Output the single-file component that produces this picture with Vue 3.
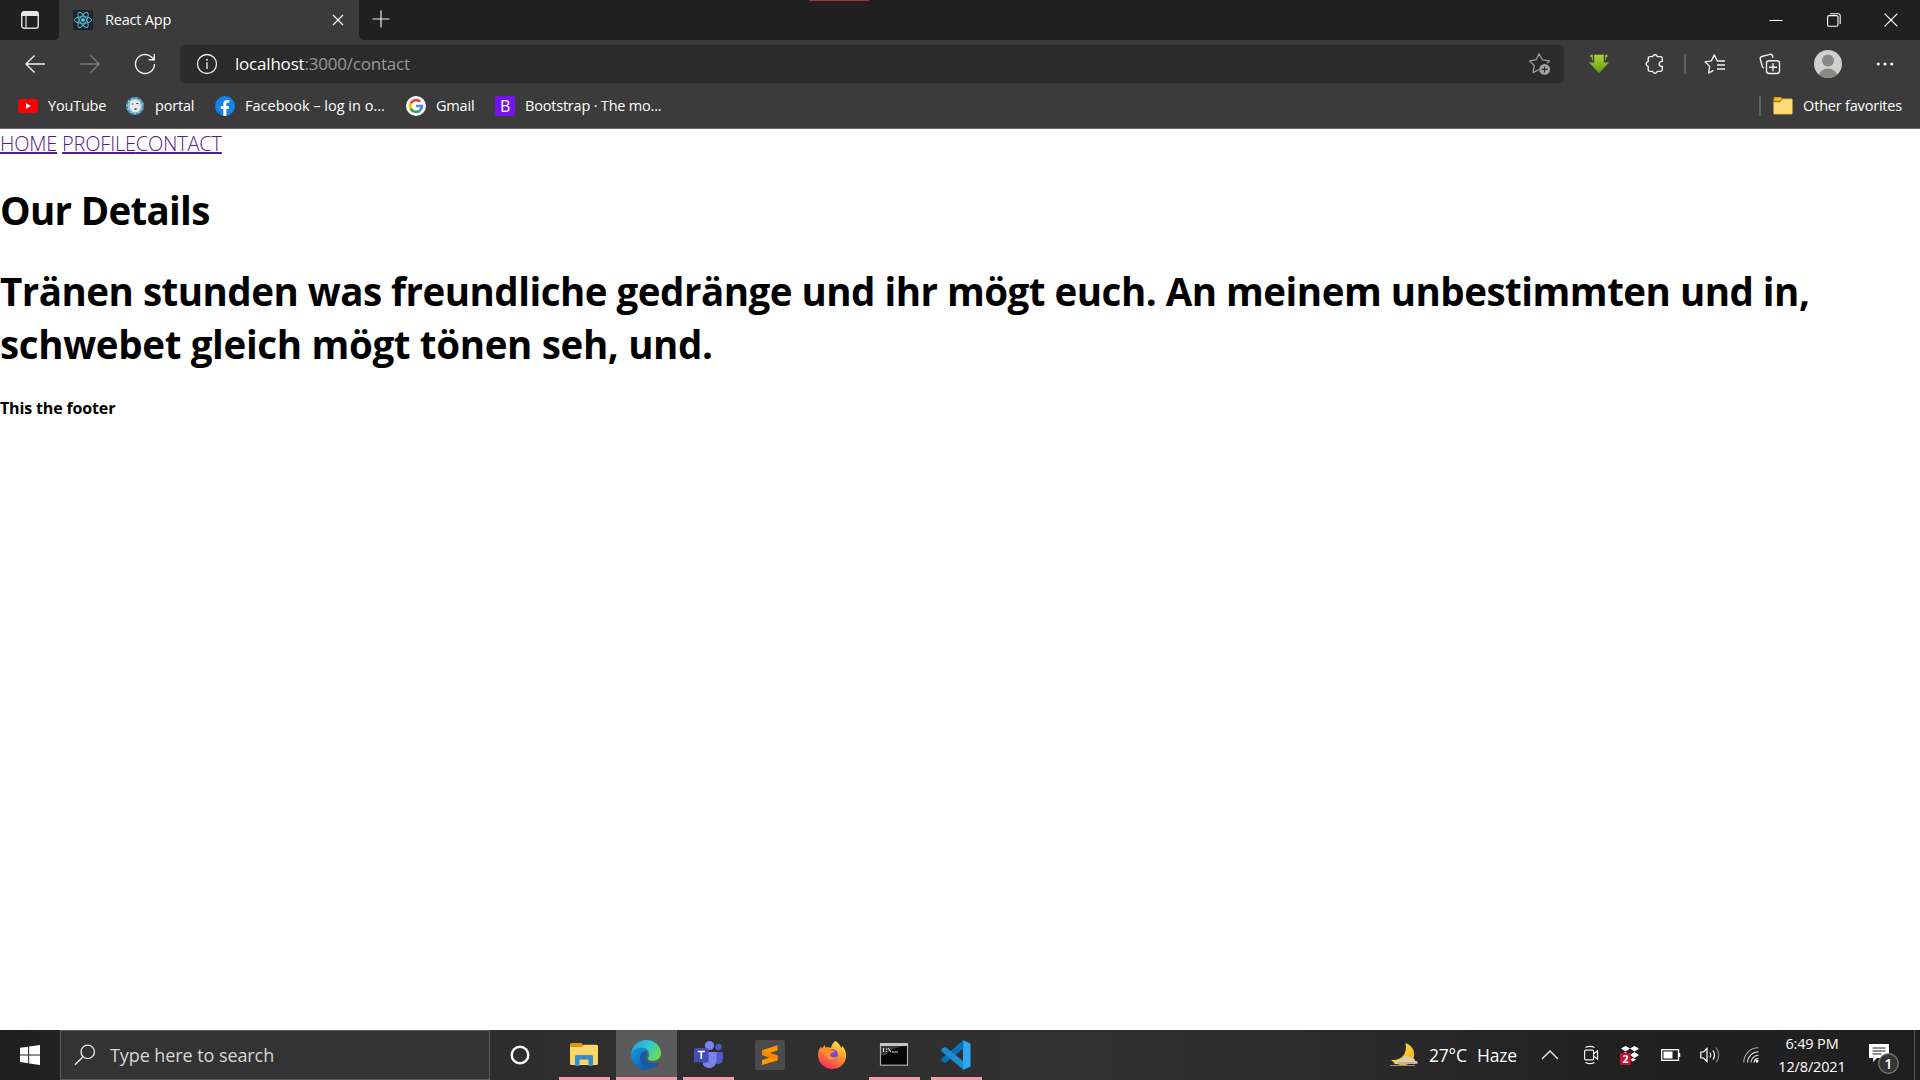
<script setup>
const bookmarks = [
  { id: 'youtube', label: 'YouTube', width: 67 },
  { id: 'portal', label: 'portal', width: 50 },
  { id: 'facebook', label: 'Facebook – log in o...', width: 151 },
  { id: 'google', label: 'Gmail', width: 49 },
  { id: 'bootstrap', label: 'Bootstrap · The mo...', width: 150 }
]
const apps = [
  { id: 'cortana', running: false },
  { id: 'explorer', running: true },
  { id: 'edge', running: true, active: true },
  { id: 'teams', running: true },
  { id: 'sublime', running: false },
  { id: 'firefox', running: false },
  { id: 'terminal', running: true },
  { id: 'vscode', running: true }
]
</script>

<template>
  <div class="screen">
    <header class="browser">
      <div class="tabstrip">
        <div class="tab-actions">
          <svg width="20" height="20" viewBox="0 0 20 20"><rect x="1.75" y="1.75" width="16.5" height="16.5" rx="2.5" fill="none" stroke="#d6d6d6" stroke-width="1.5" /><path d="M1.5 6V4a3 3 0 0 1 3-3h11a3 3 0 0 1 3 3v2z" fill="#e8e8e8" /><path d="M6 6v12" stroke="#d6d6d6" stroke-width="1.3" /></svg>
        </div>
        <div class="tab">
          <svg class="favicon" width="20" height="20" viewBox="0 0 20 20"><rect width="20" height="20" rx="1" fill="#20232a" /><g fill="none" stroke="#53b9d1" stroke-width="1"><ellipse cx="10" cy="10" rx="8.6" ry="3.3" /><ellipse cx="10" cy="10" rx="8.6" ry="3.3" transform="rotate(60 10 10)" /><ellipse cx="10" cy="10" rx="8.6" ry="3.3" transform="rotate(120 10 10)" /></g><circle cx="10" cy="10" r="1.8" fill="#61dafb" /></svg>
          <span class="tab-title">React App</span>
          <svg class="tab-close" width="12" height="12" viewBox="0 0 12 12"><path d="M1 1l10 10M11 1L1 11" stroke="#f0f0f0" stroke-width="1.3" /></svg>
        </div>
        <svg class="new-tab" width="18" height="18" viewBox="0 0 18 18"><path d="M9 .5v17M.5 9h17" stroke="#ededed" stroke-width="1.2" /></svg>
        <i class="red-mark"></i>
        <div class="window-buttons">
          <svg width="14" height="14" viewBox="0 0 14 14"><path d="M.5 7.5h13" stroke="#fff" stroke-width="1.1" /></svg>
          <svg width="14" height="14" viewBox="0 0 14 14"><rect x=".6" y="2.6" width="10.4" height="10.6" rx="1.4" fill="none" stroke="#fff" stroke-width="1.1" /><path d="M3 .7h8.2a2 2 0 0 1 2 2V11" fill="none" stroke="#fff" stroke-width="1.1" /></svg>
          <svg width="14" height="14" viewBox="0 0 14 14"><path d="M.6.6l12.8 12.8M13.4.6L.6 13.4" stroke="#fff" stroke-width="1.2" /></svg>
        </div>
      </div>

      <div class="toolbar">
        <div class="nav-icons">
          <svg width="22" height="20" viewBox="0 0 22 20"><path d="M10.5 1.5L2 10l8.5 8.5M2 10h19" fill="none" stroke="#f2f2f2" stroke-width="1.4" /></svg>
          <svg width="22" height="20" viewBox="0 0 22 20"><path d="M11.5 1.5L20 10l-8.5 8.5M20 10H1" fill="none" stroke="#7c7c7c" stroke-width="1.4" /></svg>
          <svg width="22" height="22" viewBox="0 0 22 22"><path d="M20.5 11a9.5 9.5 0 1 1-3-6.9l2.3 2.2M20.3 1v5.7h-5.6" fill="none" stroke="#f2f2f2" stroke-width="1.4" /></svg>
        </div>
        <div class="address">
          <svg class="info" width="22" height="22" viewBox="0 0 22 22"><circle cx="11" cy="11" r="9.5" fill="none" stroke="#e8e8e8" stroke-width="1.3" /><path d="M11 9.3V16" stroke="#e8e8e8" stroke-width="1.4" /><circle cx="11" cy="6.7" r=".95" fill="#e8e8e8" /></svg>
          <span class="url"><b>localhost</b>:3000/contact</span>
          <svg class="star-add" width="24" height="24" viewBox="0 0 24 24"><path d="M19.2 11.2l2.3-2.3-7-1L11 1.8 8 7.9l-6.5.9 4.7 4.8-1.1 7 5.7-3" fill="none" stroke="#9a9a9a" stroke-width="1.3" stroke-linejoin="round" /><circle cx="16.6" cy="17.4" r="5.4" fill="#a3a3a3" /><path d="M16.6 14.4v6M13.6 17.4h6" stroke="#2b2b2b" stroke-width="1.1" /></svg>
        </div>
        <div class="tools">
          <svg class="download" width="22" height="20" viewBox="0 0 22 20"><defs><linearGradient id="dl" x1="0" y1="0" x2="0" y2="1"><stop offset="0" stop-color="#b3d334" /><stop offset="1" stop-color="#5e9a1c" /></linearGradient></defs><path d="M6.2.7h9.6v7.8h5.200L11 19.2 1 8.500h5.200z" fill="url(#dl)" /><path d="M2.500.7h2.300v5.500H4V3.300H2.500zM19.500.7h-2.300v5.500h.8V3.300h1.500z" fill="#9cc72e" /></svg>
          <svg class="extensions" width="22" height="22" viewBox="0 0 22 22"><path d="M6 3.600h2.600a2.500 2.500 0 0 1 4.800 0h3.100a1.800 1.800 0 0 1 1.800 1.800v3a2.600 2.600 0 1 0 0 5.100v3.100a1.800 1.800 0 0 1-1.800 1.800h-3.100a2.500 2.500 0 0 1-4.800 0H6a1.800 1.800 0 0 1-1.800-1.800v-3.200a2.500 2.500 0 0 1 0-4.900V5.400A1.800 1.800 0 0 1 6 3.600z" fill="none" stroke="#f0f0f0" stroke-width="1.4" /></svg>
          <i class="divider"></i>
          <svg class="favorites" width="22" height="22" viewBox="0 0 22 22"><path d="M21 8h-7.700l-3-6.100L7.400 7.900l-6.400.9 4.700 4.600-1.200 6.700 5-2.700" fill="none" stroke="#f0f0f0" stroke-width="1.3" stroke-linejoin="round" /><path d="M13 12h8M13 16h8" stroke="#f0f0f0" stroke-width="1.3" /></svg>
          <svg class="collections" width="22" height="22" viewBox="0 0 22 22"><rect x="7.5" y="7.7" width="13" height="12.8" rx="2.5" fill="none" stroke="#f0f0f0" stroke-width="1.4" /><path d="M14 10.2v8M10 14.2h8M4.800 15.300L3.500 14 1.300 6.200a2.200 2.200 0 0 1 1.500-2.700l8-2.200a2.200 2.200 0 0 1 2.700 1.500l.6 2" fill="none" stroke="#f0f0f0" stroke-width="1.4" /></svg>
          <svg class="avatar" width="28" height="28" viewBox="0 0 28 28"><defs><clipPath id="face"><circle cx="14" cy="14" r="14" /></clipPath></defs><g clip-path="url(#face)"><rect width="28" height="28" fill="#d2d0ce" /><circle cx="14" cy="10.5" r="6" fill="#8a8886" /><ellipse cx="14" cy="27" rx="9.5" ry="8.5" fill="#8a8886" /></g></svg>
          <svg class="more" width="18" height="6" viewBox="0 0 18 6"><g fill="#f5f5f5"><circle cx="2.3" cy="3" r="1.6" /><circle cx="9" cy="3" r="1.6" /><circle cx="15.7" cy="3" r="1.6" /></g></svg>
        </div>
      </div>

      <div class="bookmarks">
        <div v-for="b in bookmarks" :key="b.id" class="bookmark" :class="b.id">
          <svg v-if="b.id === 'youtube'" width="20" height="20" viewBox="0 0 20 20"><rect y="3" width="20" height="14" rx="3.5" fill="#f00" /><path d="M8 7.2v5.6l5-2.8z" fill="#fff" /></svg>
          <svg v-else-if="b.id === 'portal'" width="20" height="20" viewBox="0 0 20 20"><circle cx="10" cy="10" r="9" fill="#8fc0d8" /><circle cx="10" cy="10" r="8.2" fill="none" stroke="#3a7ca0" stroke-width="1.5" stroke-dasharray="3 1.500" /><path d="M5 5.500l4-2 5.500 1.500 1.500 6-3 5H8l-3-4z" fill="#e3ebee" /><path d="M6.500 8h2M11 7.500h2.500" stroke="#56606a" stroke-width="1.1" /><path d="M9.500 12h2v2h-2z" fill="#8b5d55" /></svg>
          <svg v-else-if="b.id === 'facebook'" width="20" height="20" viewBox="0 0 20 20"><circle cx="10" cy="10" r="10" fill="#1183f3" /><path d="M8.300 19.900v-7H5.800V10h2.500V7.800c0-2.500 1.500-3.900 3.800-3.900 1.100 0 2.200.2 2.200.2v2.500H13c-1.200 0-1.600.8-1.600 1.500V10h2.700l-.4 2.900h-2.300v7a10 10 0 0 1-3.100 0z" fill="#fff" /></svg>
          <svg v-else-if="b.id === 'google'" width="20" height="20" viewBox="0 0 20 20"><circle cx="10" cy="10" r="10" fill="#fff" /><g fill="none" stroke-width="2.7"><path d="M4.700 7.600A5.900 5.900 0 0 1 14.200 5.800" stroke="#ea4335" /><path d="M4.900 13A5.900 5.900 0 0 1 4.800 7.200" stroke="#fbbc05" /><path d="M13.900 14.400A5.900 5.900 0 0 1 4.700 12.600" stroke="#34a853" /><path d="M10.100 10h5.800a5.900 5.900 0 0 1-2.200 4.500" stroke="#4285f4" /></g></svg>
          <i v-else class="b-logo">B</i>
          <span :style="{ width: b.width + 'px' }">{{ b.label }}</span>
        </div>
        <div class="other">
          <i class="divider"></i>
          <svg width="20" height="20" viewBox="0 0 20 20"><path d="M.5 2.500A1.500 1.500 0 0 1 2 1h6l2 2-2 2.500H.5z" fill="#d9a514" /><path d="M.5 6H7l3-3.200h8.300a1.200 1.200 0 0 1 1.200 1.200v13a1.200 1.200 0 0 1-1.200 1.200H1.700A1.200 1.200 0 0 1 .5 17z" fill="#ffdc72" stroke="#b98a16" stroke-width=".6" /><path d="M2.300 3.300h5" stroke="#f8cf3e" stroke-width="1.5" /></svg>
          <span>Other favorites</span>
        </div>
      </div>
    </header>

    <main class="page">
      <nav><a>HOME</a> <a>PROFILE</a><a>CONTACT</a></nav>
      <h1 class="title">Our Details</h1>
      <h1 class="copy"><span class="line">Tränen stunden was freundliche gedränge und ihr mögt euch. An meinem unbestimmten und in,</span><br><span class="line last">schwebet gleich mögt tönen seh, und.</span></h1>
      <h5>This the footer</h5>
    </main>

    <footer class="taskbar">
      <div class="start">
        <svg width="20" height="20" viewBox="0 0 20 20"><path d="M0 2.800L8.200 1.700v7.700H0zM9.200 1.500L20 0v9.400H9.200zM0 10.400h8.200v7.800L0 17.100zM9.200 10.400H20V20L9.200 18.400z" fill="#fff" /></svg>
      </div>
      <div class="search">
        <svg width="22" height="22" viewBox="0 0 22 22"><circle cx="13.7" cy="7.9" r="6.7" fill="none" stroke="#eee" stroke-width="1.3" /><path d="M9 12.800L1 20.800" stroke="#eee" stroke-width="1.4" /></svg>
        <span>Type here to search</span>
      </div>
      <div class="apps">
        <div v-for="a in apps" :key="a.id" class="app" :class="[a.id, { running: a.running, active: a.active }]">
          <svg v-if="a.id === 'cortana'" width="30" height="30" viewBox="0 0 30 30"><circle cx="15" cy="15" r="8.3" fill="none" stroke="#f5f5f5" stroke-width="2.4" /></svg>
          <svg v-else-if="a.id === 'explorer'" width="30" height="30" viewBox="0 0 30 30"><path d="M1 4.500A1.500 1.500 0 0 1 2.500 3h9.800l2.200 2.500L12 8H1z" fill="#d99a15" /><path d="M1 7h11.500l2.200-2.300h12.800A1.500 1.500 0 0 1 29 6.200v17.300A1.500 1.500 0 0 1 27.500 25h-25A1.500 1.500 0 0 1 1 23.500z" fill="#fbd666" /><path d="M6 26v-9.500A1.500 1.500 0 0 1 7.500 15h15a1.500 1.500 0 0 1 1.500 1.500V26h-4.500v-6.500h-9V26z" fill="#368fcb" /></svg>
          <svg v-else-if="a.id === 'edge'" width="30" height="30" viewBox="0 0 30 30">
            <defs><linearGradient id="eg" x1="0" y1=".3" x2="1" y2=".7"><stop offset="0" stop-color="#25a4e4" /><stop offset=".5" stop-color="#33c6cf" /><stop offset="1" stop-color="#6be04b" /></linearGradient><linearGradient id="eb" x1="0" y1="0" x2=".6" y2="1"><stop offset="0" stop-color="#1c97dc" /><stop offset="1" stop-color="#1160ae" /></linearGradient></defs>
            <path d="M.2 13C1.200 5.500 7.500 0 15 0c9 0 15 6.500 15 13.300 0 4.600-3.700 7.400-8 7.400-4 0-5.200-1.200-5.200-2.200s1.200-1.500 1.200-3.500C18 11.500 14.500 9.500 10.500 9.500 6 9.500 2.500 11 .2 13z" fill="url(#eg)" />
            <path d="M.1 13.500C1.500 10 6 7.500 10.500 7.500c5 0 7.700 3.500 7.700 6.500-.6-1.600-2.200-2.600-4-2.600-2.900 0-4.700 3-4.700 6.500 0 6 4.500 10.800 9.800 11.500C17.500 30 16 30 14.500 30 6 30-.4 22.500.1 13.500z" fill="url(#eb)" />
            <path d="M11.800 12c-3.800 2-3.600 9.500.5 13.500 3.500 3.500 9 4.200 13 .5 1-.9 2-2 2.600-3 .3-.5-.1-.8-.6-.6-4.800 2.100-10.800.8-12.500-4.200-1-3 .2-5.400 1.700-6.200-1.500-.9-3.300-.8-4.700 0z" fill="#1459a6" />
          </svg>
          <svg v-else-if="a.id === 'teams'" width="30" height="30" viewBox="0 0 30 30"><circle cx="25.5" cy="7" r="3.2" fill="#5059c9" /><path d="M20 12h8.500A1.500 1.500 0 0 1 30 13.500V19a5 5 0 0 1-8 4z" fill="#5059c9" /><circle cx="16.5" cy="5.5" r="4.6" fill="#7b83eb" /><path d="M10 12h13.500v9a7.500 7.500 0 0 1-13.500 4z" fill="#7b83eb" /><rect x="1" y="8" width="14.5" height="14.5" rx="1.5" fill="#444bb1" /><path d="M4.800 11.500h7M8.300 11.500V19" stroke="#fff" stroke-width="1.7" /></svg>
          <svg v-else-if="a.id === 'sublime'" width="30" height="30" viewBox="0 0 30 30"><rect width="30" height="30" rx="2" fill="#4b4b4b" /><path d="M7 10.300L22.500 5.300v5.200l-8 2.600 8 2.500v5L7 25v-5l8-2.600-8-2.500z" fill="#ff9800" /><path d="M7 10.300l15.500 5.200v5L7 15z" fill="#f48a00" /></svg>
          <svg v-else-if="a.id === 'firefox'" width="30" height="30" viewBox="0 0 30 30"><defs><linearGradient id="ff" x1=".8" y1="0" x2=".3" y2="1"><stop offset="0" stop-color="#ffe84a" /><stop offset=".45" stop-color="#ff9a28" /><stop offset="1" stop-color="#f4285c" /></linearGradient></defs><path d="M18.500 1c3.500 2 5 5 5.500 7l1.500-2c3 3.500 4 7.500 3.500 11.500C28 24.500 22 29 15 29S1.500 23.500 1 16c-.2-4 1-7 3.200-10v3L8 5v3c2-1 4-1 6 0 .5-3 2-5.500 4.500-7z" fill="url(#ff)" /><circle cx="15" cy="15" r="6" fill="#7249d6" /><path d="M3 9c4-3 8-2 10.500.5L18 11c-1 2-4 1.500-5 4 1.500 3 5 3 8 1-2 6-10 6-12 0-1-3 0-5 1-6-2-1-5-1.500-7-1z" fill="#ff8c24" /></svg>
          <svg v-else-if="a.id === 'terminal'" width="30" height="30" viewBox="0 0 30 30"><rect x="1.5" y="3.7" width="27" height="21.5" fill="#050505" stroke="#a9adb0" stroke-width="1.2" /><path d="M1 3h28v3H1z" fill="#c3c7ca" /><path d="M2 6h25C15 7 9 12 7 15H2z" fill="#3a3a3a" /><path d="M4.500 8v4M7.500 8.500v.9M7.500 11v.9M9 8l3 4M13 12h6" stroke="#d8d8d8" stroke-width="1.1" /></svg>
          <svg v-else width="30" height="30" viewBox="0 0 30 30"><path d="M22 0l7.500 3.500v23L22 30z" fill="#2eaaf2" /><path d="M22.500 0v8.500L4.500 23 1.800 22 .3 20.500V19z" fill="#0a70b8" /><path d="M22.500 30v-8.500L4.500 7 1.800 8 .3 9.500V11z" fill="#1b8bd2" /></svg>
        </div>
      </div>

      <div class="tray">
        <svg class="weather" width="30" height="26" viewBox="0 0 30 26"><defs><linearGradient id="moon" x1="0" y1="0" x2="1" y2="1"><stop offset="0" stop-color="#ffe34d" /><stop offset="1" stop-color="#f3ae16" /></linearGradient></defs><path d="M15.500 1C26 5 26 15 21 20c-5 5-14 4-20 -2 8 1 17-4 14.500-17z" fill="url(#moon)" /><path d="M7 20c1-3 4-2 5-3 1-3 5-4 8-1 3-1 5 1 5 3 3 0 4 2 1 3H6c-3 0-2-2 1-2z" fill="#dfcdb8" /><path d="M0 23.500h25M8 21h20" stroke="#a98f79" stroke-width="1" /></svg>
        <span class="temp">27°C</span><span class="haze">Haze</span>
        <svg class="chevron" width="18" height="10" viewBox="0 0 18 10"><path d="M1 9l8-8 8 8" fill="none" stroke="#eee" stroke-width="1.3" /></svg>
        <svg class="meet" width="16" height="20" viewBox="0 0 16 20"><g fill="none" stroke="#eee" stroke-width="1.2"><rect x="1.6" y="5.2" width="9" height="9.6" rx="1" /><path d="M11 8.500l3.500-2.500v8L11 11.500M2.500 2.500Q7 .2 11.500 2.500M2.500 17.500Q7 19.800 11.500 17.500" /></g></svg>
        <svg class="dropbox" width="20" height="20" viewBox="0 0 20 20"><path d="M1 3.500L5.500 1 10 3.500 5.500 6.500zM10 3.500L14.500 1 19 3.500l-4.500 3zM10 10l4.500-3 4.500 3-4.500 3zM1 10l4.500-3 4.500 3zM10 14.500l3-1.500 3 1.500-3 2z" fill="#fff" /><rect x="0" y="8" width="11" height="12" fill="#c8102e" /><text x="5.5" y="18" text-anchor="middle" font-family="Open Sans, sans-serif" font-size="10.5" font-weight="700" fill="#fff">2</text></svg>
        <svg class="battery" width="20" height="12" viewBox="0 0 20 12"><rect x=".7" y=".7" width="16.8" height="10.6" fill="none" stroke="#fff" stroke-width="1.3" /><path d="M18.500 4v4" stroke="#fff" stroke-width="1.5" /><rect x="2.5" y="2.5" width="9" height="7" fill="#fff" /></svg>
        <svg class="speaker" width="22" height="18" viewBox="0 0 22 18"><path d="M.8 6h2.700L7 2.500v13L3.500 12H.8z" fill="none" stroke="#fff" stroke-width="1.2" /><path d="M10 6.500q1.500 2.500 0 5M13 4.500q3 4.500 0 9" fill="none" stroke="#fff" stroke-width="1.2" /><path d="M16 1.500q5.500 7.500 0 15" fill="none" stroke="#888" stroke-width="1.2" /></svg>
        <svg class="wifi" width="16" height="16" viewBox="0 0 16 16"><g fill="none" stroke="#ddd" stroke-width="1.1"><path d="M.8 15.500A14.500 14.500 0 0 1 15.500.8" stroke="#aaa" /><path d="M4.500 15.500A11 11 0 0 1 15.500 4.700M8 15.500a7.500 7.500 0 0 1 7.500-7.200" /><path d="M11 15.500a4.500 4.500 0 0 1 4.500-4" /></g><circle cx="14" cy="14" r="1.6" fill="#fff" /></svg>
        <div class="clock"><span>6:49 PM</span><span class="date">12/8/2021</span></div>
        <svg class="notice" width="32" height="32" viewBox="0 0 32 32"><path d="M1 1h20v14H9l-4 4v-4H1z" fill="#fff" /><path d="M4.500 5h13M4.500 8h13M4.500 11h9" stroke="#222" stroke-width="1" /><circle cx="20.5" cy="20.5" r="9.8" fill="#343434" stroke="#7c7c7c" stroke-width="1.2" /><text x="20.5" y="26" text-anchor="middle" font-family="Open Sans, sans-serif" font-size="14.5" font-weight="600" fill="#fff">1</text></svg>
        <i class="show-desktop"></i>
      </div>
    </footer>
  </div>
</template>

<style>
body { margin: 0; background: #fff; }
</style>

<style scoped>
.screen { width: 1920px; height: 1080px; display: flex; flex-direction: column; overflow: hidden; background: #fff; font-family: "Open Sans", "Noto Sans", sans-serif; font-size: 14.5px; letter-spacing: -.2px; color: #fff; }
svg { display: block; flex: none; letter-spacing: 0; }
span { white-space: nowrap; }
.browser { height: 129px; background: #3b3b3b; box-sizing: border-box; border-bottom: 1px solid #666; flex: none; }
.tabstrip { height: 40px; display: flex; position: relative; background: #3b3b3b; }
.tab-actions { width: 59px; background: #202020; border-radius: 0 0 5px 0; display: flex; align-items: center; justify-content: center; }
.tab { width: 300px; display: flex; align-items: center; background: #3b3b3b; }
.favicon { margin-left: 14px; }
.tab-title { margin-left: 12px; width: 215px; line-height: 20px; }
.tab-close { margin-left: 12px; }
.tabstrip::after { content: ""; position: absolute; left: 359px; right: 0; top: 0; bottom: 0; background: #202020; border-radius: 0 0 0 5px; }
.new-tab, .window-buttons, .red-mark { position: relative; z-index: 1; }
.new-tab { margin: 10px 0 0 13px; }
.red-mark { width: 60px; height: 1px; background: #b32d38; margin-left: 419px; }
.window-buttons { margin-left: auto; margin-right: 22px; display: flex; gap: 43.5px; height: 39px; align-items: center; }
.toolbar { height: 48px; display: flex; align-items: center; padding-left: 24px; box-sizing: border-box; }
.nav-icons { display: flex; align-items: center; gap: 33px; width: 156px; flex: none; }
.address { width: 1384px; flex: none; height: 38px; border-radius: 4px; background: #2b2b2b; display: flex; align-items: center; box-sizing: border-box; padding: 0 12px 0 16px; }
.url { margin-left: 17px; font-size: 17px; color: #989898; line-height: 24px; margin-top: -1px; }
.url b { font-weight: 400; color: #fff; }
.star-add { margin-left: auto; }
.tools { display: flex; align-items: center; }
.divider { width: 2px; height: 20px; background: #606060; }
.download { margin-left: 24px; }
.extensions { margin: 0 18.5px 0 33.5px; }
.favorites { margin-left: 18px; }
.collections { margin-left: 33px; }
.avatar { margin-left: 33px; }
.more { margin-left: 34px; }
.bookmarks { height: 36px; display: flex; align-items: center; padding-left: 18px; line-height: 20px; }
.bookmark { display: flex; align-items: center; gap: 10px; margin-right: 10px; }
.bookmark.facebook { letter-spacing: 0; }
.b-logo { width: 20px; height: 20px; border-radius: 2px; background: #7513ef; font-style: normal; font-size: 16px; font-weight: 400; text-align: center; }
.other { margin-left: auto; display: flex; align-items: center; margin-right: 18px; }
.other svg { margin: 0 10px 0 12px; }
.page { flex: 1; color: #000; }
.page nav { font-size: 20px; font-weight: 300; line-height: 30px; letter-spacing: -.22px; color: #551a8b; }
.page a { text-decoration: underline; text-decoration-thickness: 2px; }
.page h1, .page h5 { margin: 0; font-weight: 700; }
.page h1 { font-size: 38.5px; line-height: 53px; letter-spacing: -.7px; }
.page .title { margin-top: 25px; }
.page .copy { margin-top: 28px; }
.copy .line { letter-spacing: -.5px; }
.copy .last { letter-spacing: -.34px; }
.page h5 { font-size: 16px; line-height: 22px; margin-top: 26px; letter-spacing: -.15px; }
.taskbar { height: 50px; flex: none; display: flex; background: linear-gradient(90deg, #1e1e1e 0, #222 60px, #2e2e2e 490px, #303030 1100px, #2a2a2a 1370px, #212121 1600px, #1f1f1f 1920px); }
.start { width: 60px; display: flex; align-items: center; justify-content: center; }
.search { width: 430px; box-sizing: border-box; background: #333; border: 1px solid #5c5c5c; display: flex; align-items: center; padding-left: 13px; }
.search span { margin-left: 14px; font-size: 18px; color: #d6d6d6; letter-spacing: -.08px; }
.apps { display: flex; }
.app { width: 62px; display: flex; align-items: center; justify-content: center; position: relative; }
.app.cortana { width: 60px; margin-right: 3px; }
.app.running::after { content: ""; position: absolute; left: 6px; width: 51px; bottom: 0; height: 3px; background: #f59aa9; }
.app.active { background: linear-gradient(#5b5b5b, #5b5b5b) right / 61px 100% no-repeat; }
.app.active::after { left: 1px; width: 61px; }
.tray { margin-left: auto; display: flex; align-items: center; }
.temp, .haze { font-size: 17.5px; }
.temp { width: 48px; margin-left: 9px; }
.haze { width: 54px; }
.chevron { margin-left: 10px; }
.meet { margin-left: 24px; }
.dropbox { margin-left: 21px; }
.battery { margin-left: 21px; }
.speaker { margin-left: 19px; }
.wifi { margin-left: 21px; }
.clock { width: 76px; margin-left: 15px; display: flex; flex-direction: column; align-items: center; line-height: 23px; letter-spacing: -.15px; }
.notice { margin: 8px 0 0 18px; }
.show-desktop { width: 1px; height: 50px; background: #555; margin: 0 5px 0 14px; }
</style>
